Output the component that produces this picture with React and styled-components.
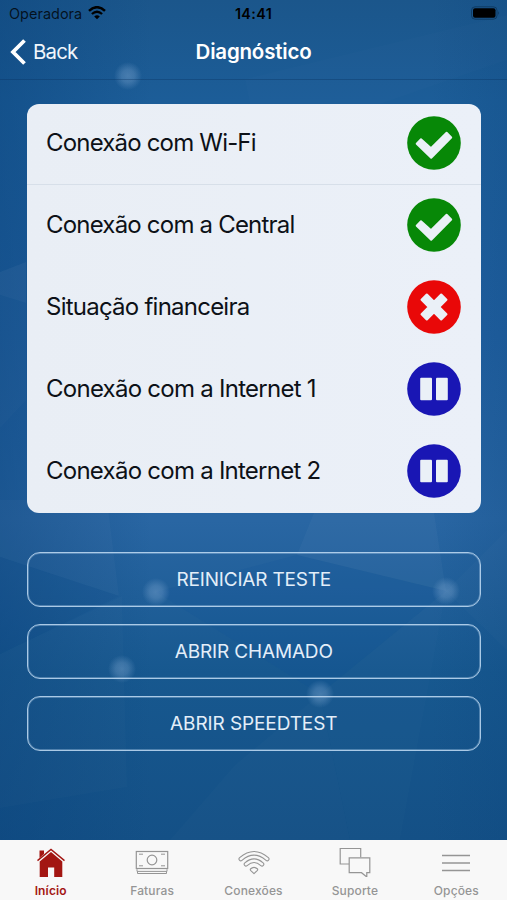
import styled, { createGlobalStyle } from 'styled-components';

const GlobalStyle = createGlobalStyle`
  * {
    box-sizing: border-box;
  }

  body {
    margin: 0;
    font-family: Inter, 'Liberation Sans', sans-serif;
  }
`;

const Screen = styled.div`
  position: relative;
  display: flex;
  flex-direction: column;
  width: 507px;
  height: 900px;
  overflow: hidden;
  background: #17568f;
`;

const Backdrop = styled.svg`
  position: absolute;
  top: 0;
  left: 0;
  width: 507px;
  height: 840px;
`;

const StatusBar = styled.div`
  position: relative;
  display: grid;
  grid-template-columns: 1fr auto 1fr;
  align-items: center;
  height: 28px;
  padding: 0 7px 2px 9px;
  color: #000;
`;

const Carrier = styled.div`
  display: flex;
  align-items: center;
  gap: 6px;
  font-size: 14.5px;
  color: rgba(0, 0, 0, 0.78);
`;

const Clock = styled.div`
  margin-right: 2px;
  font-size: 14.3px;
  font-weight: 600;
  letter-spacing: 0.4px;
`;

const Battery = styled.svg`
  justify-self: end;
`;

const NavBar = styled.header`
  position: relative;
  display: grid;
  grid-template-columns: 1fr auto 1fr;
  align-items: center;
  height: 52px;
  padding: 0 10px 4px;
  border-bottom: 1px solid rgba(8, 50, 95, 0.35);
  color: #fff;
`;

const BackButton = styled.button`
  display: flex;
  align-items: center;
  gap: 7px;
  padding: 0;
  border: none;
  background: none;
  color: #f0f6fc;
  font-family: inherit;
  font-size: 20.4px;
  letter-spacing: -0.8px;
`;

const Title = styled.h1`
  margin: 0;
  font-size: 20.5px;
  font-weight: 600;
  letter-spacing: -0.2px;
`;

const Content = styled.main`
  position: relative;
  flex: 1;
  padding: 24px 26px 0 26.5px;
`;

const Card = styled.div`
  height: 409px;
  border-radius: 12px;
  background: linear-gradient(90deg, #e9eef5, #ebf0f8);
`;

const Row = styled.div`
  display: flex;
  align-items: center;
  justify-content: space-between;
  height: ${({ $divided }) => ($divided ? '81.4px' : '81.8px')};
  padding: 0 20px 2px 19.5px;
  border-bottom: ${({ $divided }) => ($divided ? '1px solid #d7dfe9' : 'none')};
`;

const RowLabel = styled.span`
  padding-bottom: 1px;
  color: #0d1117;
  font-size: 24px;
  letter-spacing: ${({ $spacing }) => $spacing}px;
`;

const Actions = styled.div`
  display: flex;
  flex-direction: column;
  gap: 17px;
  margin-top: 39px;
`;

const ActionButton = styled.button`
  height: 55px;
  padding: 0;
  border: 1px solid rgba(196, 222, 246, 0.85);
  border-radius: 13px;
  background: transparent;
  box-shadow: inset 0 0 0 1px rgba(190, 217, 243, 0.35);
  color: #e3eef9;
  font-family: inherit;
  font-size: 19px;
  letter-spacing: ${({ $spacing }) => $spacing}px;
`;

const TabBar = styled.nav`
  position: relative;
  display: flex;
  height: 60px;
  background: #f8f8f8;
`;

const Tab = styled.div`
  display: flex;
  flex: 1;
  flex-direction: column;
  align-items: center;
  padding-top: 5px;
  color: ${({ $active }) => ($active ? '#a31612' : '#959595')};
`;

const TabLabel = styled.span`
  margin-top: 6px;
  font-size: 12px;
  font-weight: ${({ $active }) => ($active ? 600 : 500)};
  line-height: 16px;
  letter-spacing: 0.15px;
`;

const glows = [
  [128, 76],
  [156, 592],
  [446, 591],
  [122, 669],
  [320, 694],
];

const Background = () => (
  <Backdrop viewBox="0 0 507 840">
    <defs>
      <linearGradient id="base" x1="0" y1="0" x2="0" y2="1">
        <stop offset="0" stopColor="#1b568b" />
        <stop offset="0.12" stopColor="#1c5d98" />
        <stop offset="0.4" stopColor="#205f9f" />
        <stop offset="0.62" stopColor="#2966a3" />
        <stop offset="0.8" stopColor="#17588f" />
        <stop offset="1" stopColor="#145086" />
      </linearGradient>
      <linearGradient id="side" x1="0" y1="0" x2="1" y2="0">
        <stop offset="0" stopColor="#0a437c" stopOpacity="0.45" />
        <stop offset="0.3" stopColor="#0a437c" stopOpacity="0" />
        <stop offset="0.85" stopColor="#0a437c" stopOpacity="0" />
        <stop offset="1" stopColor="#0a437c" stopOpacity="0.2" />
      </linearGradient>
      <radialGradient id="glow">
        <stop offset="0" stopColor="#86add6" stopOpacity="0.42" />
        <stop offset="0.45" stopColor="#86add6" stopOpacity="0.32" />
        <stop offset="1" stopColor="#86add6" stopOpacity="0" />
      </radialGradient>
    </defs>
    <rect width="507" height="840" fill="url(#base)" />
    <rect width="507" height="840" fill="url(#side)" />
    <g fill="#fff">
      <path d="M245 79 L507 15 L507 60 L380 104 L250 104Z" fillOpacity="0.012" />
      <path d="M0 272 L26 262 L26 303 L0 295Z" fillOpacity="0.04" />
      <path d="M0 295 L26 303 L26 400 L0 428Z" fillOpacity="0.015" />
      <path d="M0 500 L107 500 L119 596 L0 557Z" fillOpacity="0.025" />
      <path d="M314 513 L434 513 L446 591 L297 555Z" fillOpacity="0.03" />
      <path d="M446 591 L507 530 L507 650Z" fillOpacity="0.015" />
      <path d="M122 596 L127 787 L0 808 L0 654Z" fillOpacity="0.014" />
      <path d="M235 765 L320 694 L350 840 L170 840Z" fillOpacity="0.015" />
      <path d="M320 694 L446 591 L400 840 L350 840Z" fillOpacity="0.01" />
    </g>
    <path d="M297 555 L446 591 L320 694 L156 592Z" fill="#0d4f9a" fillOpacity="0.15" />
    <path d="M0 557 L119 596 L0 654Z" fill="#07427c" fillOpacity="0.08" />
    {glows.map(([x, y]) => (
      <circle key={`${x}-${y}`} cx={x} cy={y} r="14" fill="url(#glow)" />
    ))}
  </Backdrop>
);

const StatusIcon = ({ status }) => (
  <svg width="54" height="54" viewBox="-27 -27 54 54">
    {status === 'ok' && (
      <>
        <circle r="26.8" fill="#078807" />
        <path
          d="M-17.3 .7 L-13 -3.7 L-3 5.2 L12.6 -10.3 L17.2 -5.5 L-2.8 14.8Z"
          fill="#eaf0f7"
          stroke="#eaf0f7"
          strokeWidth="2"
          strokeLinejoin="round"
        />
      </>
    )}
    {status === 'error' && (
      <>
        <circle r="26.8" fill="#e90808" />
        <path
          d="M0 -5.2 L7.2 -12.4 L12.4 -7.2 L5.2 0 L12.4 7.2 L7.2 12.4 L0 5.2 L-7.2 12.4 L-12.4 7.2 L-5.2 0 L-12.4 -7.2 L-7.2 -12.4Z"
          fill="#eaf0f7"
          stroke="#eaf0f7"
          strokeWidth="2.2"
          strokeLinejoin="round"
        />
      </>
    )}
    {status === 'paused' && (
      <>
        <circle r="26.8" fill="#1916b4" />
        <rect x="-13.8" y="-11.2" width="11.8" height="22.4" rx="1" fill="#eaf0f7" />
        <rect x="2" y="-11.2" width="11.8" height="22.4" rx="1" fill="#eaf0f7" />
      </>
    )}
  </svg>
);

const WifiIcon = () => (
  <svg width="18" height="14" viewBox="0 0 18 14" fill="none" stroke="#000">
    <path d="M1 4.9 Q9 -2.5 17 4.9" strokeWidth="2.5" />
    <path d="M3.9 8 Q9 3.4 14.1 8" strokeWidth="2.3" />
    <path d="M6.2 10.4 Q9 8 11.8 10.4 L9 13.3Z" fill="#000" stroke="none" />
  </svg>
);

const HomeIcon = () => (
  <svg width="30" height="32" viewBox="0 0 30 32" fill="currentColor">
    <path d="M3.5 5.5 H8 V9 L3.5 13Z" />
    <path d="M1.5 15.6 L15 4.5 L28.5 15.6" fill="none" stroke="currentColor" strokeWidth="1.4" />
    <path d="M15 7 L26.3 16.6 V32 H18.2 V22.5 H12 V32 H3.7 V16.6Z" />
  </svg>
);

const MoneyIcon = () => (
  <svg width="34" height="32" viewBox="0 0 34 32" fill="none" stroke="currentColor">
    <rect x="1.3" y="6.5" width="31.4" height="17" strokeWidth="1.2" />
    <circle cx="17" cy="15" r="4.8" strokeWidth="1.2" />
    <path d="M4 9.2 H8 M26 9.2 H30 M4 20.8 H8 M26 20.8 H30" />
    <path d="M2 24.2 V26.4 H32 V24.2 M2.5 26.6 V28.5 H31.5 V26.6" />
  </svg>
);

// each band is a grey arc with a lighter one on top, which leaves only its outline
const ConnectionIcon = () => (
  <svg width="34" height="32" viewBox="0 0 34 32" fill="none" strokeLinecap="round">
    <g stroke="currentColor" strokeWidth="4.6">
      <path d="M3.8 14 Q17 2.6 30.2 14" />
      <path d="M9 19.2 Q17 12.2 25 19.2" />
    </g>
    <g stroke="#f8f8f8" strokeWidth="2.5">
      <path d="M3.8 14 Q17 2.6 30.2 14" />
      <path d="M9 19.2 Q17 12.2 25 19.2" />
    </g>
    <path
      d="M13.4 24 Q17 20.6 20.6 24 Q21 24.8 20.2 25.6 L17 28.6 L13.8 25.6 Q13 24.8 13.4 24Z"
      stroke="currentColor"
      strokeWidth="1.1"
      strokeLinejoin="round"
    />
  </svg>
);

const ChatIcon = () => (
  <svg width="32" height="32" viewBox="0 0 32 32" fill="none" stroke="currentColor" strokeWidth="1.2">
    <path d="M10 19 H1.2 V3.5 H21.7 V12.3" />
    <path d="M10.2 12.8 H30.8 V27.7 H27.8 V32 L22.5 27.7 H10.2Z" />
  </svg>
);

const MenuIcon = () => (
  <svg width="28" height="32" viewBox="0 0 28 32" fill="none" stroke="currentColor" strokeWidth="1.4">
    <path d="M0 10.5 H28 M0 18 H28 M0 25.5 H28" />
  </svg>
);

const checks = [
  { label: 'Conexão com Wi-Fi', status: 'ok', spacing: -0.82 },
  { label: 'Conexão com a Central', status: 'ok', spacing: -0.8 },
  { label: 'Situação financeira', status: 'error', spacing: -0.76 },
  { label: 'Conexão com a Internet 1', status: 'paused', spacing: -0.74 },
  { label: 'Conexão com a Internet 2', status: 'paused', spacing: -0.75 },
];

const actions = [
  { label: 'REINICIAR TESTE', spacing: -0.2 },
  { label: 'ABRIR CHAMADO', spacing: -0.15 },
  { label: 'ABRIR SPEEDTEST', spacing: -0.1 },
];

const tabs = [
  { label: 'Início', Icon: HomeIcon, active: true },
  { label: 'Faturas', Icon: MoneyIcon },
  { label: 'Conexões', Icon: ConnectionIcon },
  { label: 'Suporte', Icon: ChatIcon },
  { label: 'Opções', Icon: MenuIcon },
];

export default function App() {
  return (
    <>
      <GlobalStyle />
      <Screen>
        <Background />
        <StatusBar>
          <Carrier>
            Operadora
            <WifiIcon />
          </Carrier>
          <Clock>14:41</Clock>
          <Battery width="30" height="14" viewBox="0 0 30 14">
            <rect x="1.5" y="0.8" width="25.5" height="12.4" rx="3.6" fill="none" stroke="#0b2f50" strokeOpacity="0.65" />
            <rect x="3" y="2.3" width="22.5" height="9.4" rx="2" />
            <path d="M28.2 5 Q30 7 28.2 9Z" fill="#0b2f50" fillOpacity="0.7" />
          </Battery>
        </StatusBar>
        <NavBar>
          <BackButton>
            <svg width="16" height="26" viewBox="0 0 16 26" fill="none" stroke="#fff" strokeWidth="3.8">
              <path d="M14.5 1.5 L3 13 L14.5 24.5" />
            </svg>
            Back
          </BackButton>
          <Title>Diagnóstico</Title>
        </NavBar>
        <Content>
          <Card>
            {checks.map(({ label, status, spacing }, index) => (
              <Row key={label} $divided={index === 0}>
                <RowLabel $spacing={spacing}>{label}</RowLabel>
                <StatusIcon status={status} />
              </Row>
            ))}
          </Card>
          <Actions>
            {actions.map(({ label, spacing }) => (
              <ActionButton key={label} $spacing={spacing}>
                {label}
              </ActionButton>
            ))}
          </Actions>
        </Content>
        <TabBar>
          {tabs.map(({ label, Icon, active }) => (
            <Tab key={label} $active={active}>
              <Icon />
              <TabLabel $active={active}>{label}</TabLabel>
            </Tab>
          ))}
        </TabBar>
      </Screen>
    </>
  );
}
